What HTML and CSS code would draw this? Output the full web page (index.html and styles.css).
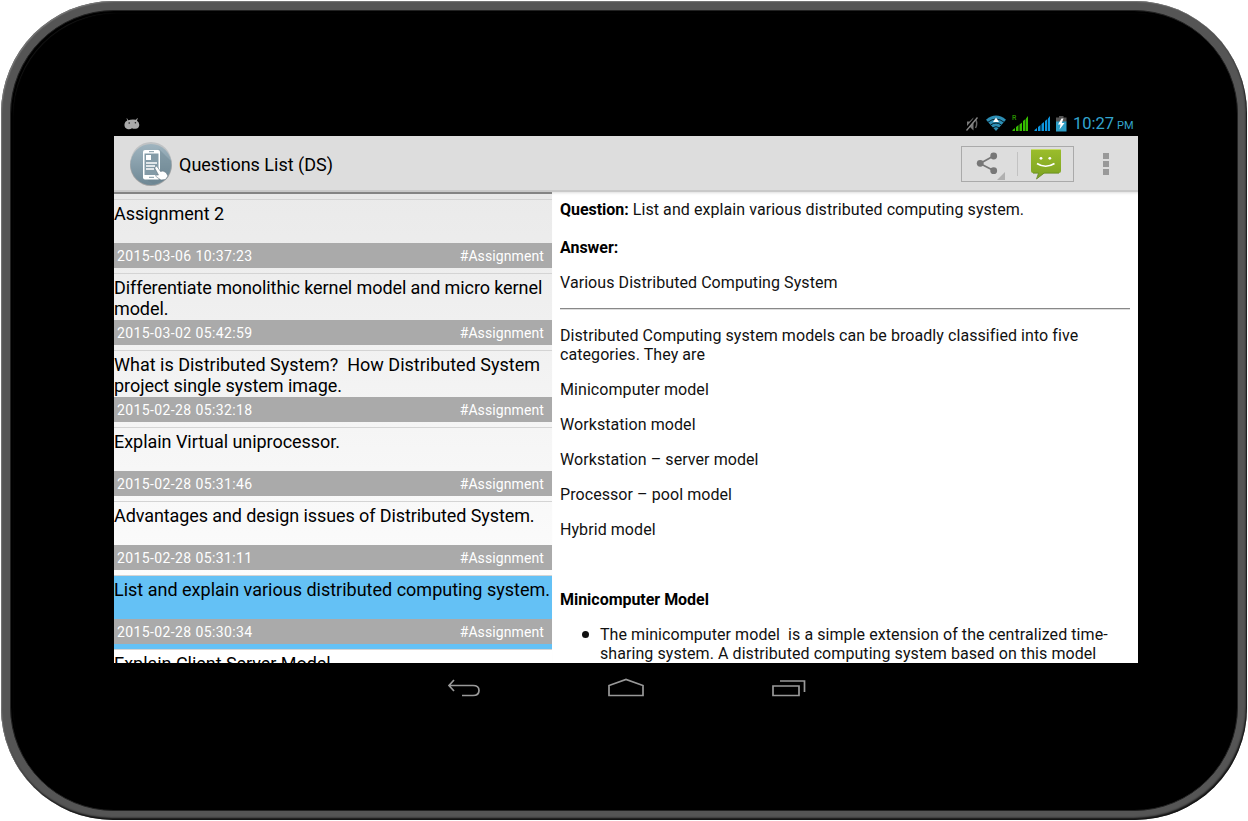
FILE: index.html
```html
<!DOCTYPE html>
<html lang="en">
<head>
<meta charset="utf-8">
<title>Questions List (DS)</title>
<link rel="stylesheet" href="styles.css">
</head>
<body>
<div class="tablet"><div class="bezel"><div class="screen">
  <div class="status">
    <svg class="droid" width="16" height="12" viewBox="0 0 16 12"><path d="M3 .2 4.2 2.2Q8 1 12 1.8L13.3 0 13.7.4 13 2.7Q15.2 4 15.3 7 15 10.6 11.5 10.8 9.5 11 8 10.2 6.5 11.5 4 11.2 0 10.5.5 6 1 3.5 3.3 2.6L2.5.5Z" fill="#aaa"/><circle cx="5.2" cy="5" r=".8" fill="#222"/><circle cx="11.4" cy="4.8" r=".8" fill="#222"/></svg>
    <svg class="indicators" width="104" height="20" viewBox="0 0 104 20">
      <path d="M3 8.500H5.500L9.500 4.500V17.500L6 14H3Z" fill="#777"/><path d="M11.500 6.500Q14 10 11.500 15" fill="none" stroke="#666" stroke-width="1.500"/><path d="M1.500 16.500 12.500 3.500" stroke="#000" stroke-width="2"/><path d="M2.500 17.500 13.500 4.500" stroke="#888" stroke-width="1.300"/>
      <path d="M22 6.700Q32 -1.500 42 6.700L32 18Z" fill="#2d8eb4"/><path d="M24 9.200Q32 2.800 40 9.200M26.600 12Q32 8 37.400 12M29 14.700Q32 12.600 35 14.700" fill="none" stroke="#051f2a"/><path d="M32 4.500 35 9H29Z" fill="#fff"/>
      <path d="M48.500 18V17L51 15V18ZM52 18V14L54.500 12V18ZM55.500 18V11.500L58 9.500V18ZM59 18V8L61.500 6V18ZM62 18V5.500L64 3V18Z" fill="#36bd00"/>
      <text class="roaming" x="48" y="7">R</text>
      <path d="M70.500 18V17L73 15V18ZM74 18V14L76.500 12V18ZM77.500 18V11L80 9V18ZM81 18V8L83.300 6V18ZM84 18V5.500L86 3V18Z" fill="#0c95df"/>
      <path d="M95 3H99.500V4.500H102.500V9H92V4.500H95Z" fill="#555"/><path d="M92 8.500H102.500V18.500H92Z" fill="#2d9dc5"/><path d="M97.500 5.500 94 11.500H96.500L95.500 16.500 100.500 10H97.800L99.500 5.500Z" fill="#fff"/>
    </svg>
    <div class="clock">10:27<span class="pm">PM</span></div>
  </div>
  <div class="actionbar">
    <svg class="appicon" width="44" height="48" viewBox="0 0 44 48">
      <defs><linearGradient id="disc" x2="0" y2="1"><stop offset="0" stop-color="#9fb4bf"/><stop offset="1" stop-color="#6f8895"/></linearGradient></defs>
      <circle cx="22" cy="25" r="21" fill="#a3a3a3"/><circle cx="22" cy="22.500" r="20.500" fill="#bfc2c4"/><circle cx="22" cy="24.500" r="20.500" fill="url(#disc)"/>
      <path d="M30 9 42 21Q43 33 34 41L24 44 14 37Z" fill="#647d8a" opacity=".35"/>
      <rect x="14" y="10" width="17" height="29.500" rx="2" fill="#fff"/><rect x="15.500" y="13.500" width="14" height="21.500" fill="#849ba7"/><rect x="17" y="15" width="5" height="5" fill="#fff"/><path d="M17 23H28M17 26H26M17 29H25" stroke="#fff" stroke-width="1.300"/><path d="M20 37.300H25M20 11.700H25" stroke="#7f97a3"/>
      <path d="M26 27Q27.500 25.500 28.500 27L31.500 31.500 34 31 37 32.500 39 36 36.500 39.500 32 40 29 38 26.500 36Q26.500 34.500 29.500 35L26 28.500Z" fill="#fff" stroke="#647783" stroke-width=".6"/>
    </svg>
    <h1 class="title">Questions List (DS)</h1>
    <div class="share">
      <svg width="113" height="36" viewBox="0 0 113 36">
        <path d="M32.500 10 19 17.500 32.500 24.500" fill="none" stroke="#777" stroke-width="1.700"/><g fill="#777"><circle cx="32.700" cy="10" r="3.400"/><circle cx="19.200" cy="17.300" r="3.400"/><circle cx="32.700" cy="24.700" r="3.400"/></g>
        <path d="M44 26V34H36Z" fill="#b0b0b0"/><path d="M56.500 6V30" stroke="#c2c2c2"/>
        <defs><linearGradient id="sms" x2="0" y2="1"><stop offset="0" stop-color="#9bbd2b"/><stop offset="1" stop-color="#7da323"/></linearGradient></defs>
        <path d="M71.500 3H98.500Q100 3 100 4.500V25Q100 27 98 27H83.500L76 32.500 77.500 27H72Q70 27 70 25V4.500Q70 3 71.500 3Z" fill="url(#sms)"/><path d="M70.500 3.500H99.500" stroke="#c7dc65"/><path d="M72 27.200H77.500L75.500 33 83 27.200H98" fill="none" stroke="#5f8518" stroke-width=".8"/>
        <circle cx="80" cy="12.300" r="1.400" fill="#fff"/><circle cx="88.800" cy="12.300" r="1.400" fill="#fff"/><path d="M76 17.500Q84.500 23 93.500 17.500" fill="none" stroke="#fff" stroke-width="1.600"/>
      </svg>
    </div>
    <div class="overflow"><i></i><i></i><i></i></div>
  </div>
  <div class="content">
    <div class="list">
      <div class="row"><div class="name snug">Assignment 2</div><div class="meta"><span class="date">2015-03-06 10:37:23</span><span class="tag">#Assignment</span></div></div>
      <div class="row"><div class="name tall tight">Differentiate monolithic kernel model and micro kernel<br>model.</div><div class="meta"><span class="date">2015-03-02 05:42:59</span><span class="tag">#Assignment</span></div></div>
      <div class="row"><div class="name tall">What is Distributed System?&nbsp; How Distributed System<br><span class="snug">project single system image.</span></div><div class="meta"><span class="date">2015-02-28 05:32:18</span><span class="tag">#Assignment</span></div></div>
      <div class="row"><div class="name snug">Explain Virtual uniprocessor.</div><div class="meta"><span class="date">2015-02-28 05:31:46</span><span class="tag">#Assignment</span></div></div>
      <div class="row"><div class="name tight">Advantages and design issues of Distributed System.</div><div class="meta"><span class="date">2015-02-28 05:31:11</span><span class="tag">#Assignment</span></div></div>
      <div class="row selected"><div class="name">List and explain various distributed computing system.</div><div class="meta"><span class="date">2015-02-28 05:30:34</span><span class="tag">#Assignment</span></div></div>
      <div class="row"><div class="name snug">Explain Client Server Model.</div></div>
    </div>
    <div class="detail">
      <div><b>Question:</b> List and explain various distributed computing system.<br><br><b>Answer:</b></div>
      <p>Various Distributed Computing System</p>
      <hr>
      <p>Distributed Computing system models can be broadly classified into five<br>categories. They are</p>
      <p>Minicomputer model</p>
      <p>Workstation model</p>
      <p>Workstation – server model</p>
      <p>Processor – pool model</p>
      <p>Hybrid model</p>
      <p>&nbsp;</p>
      <p><b>Minicomputer Model</b></p>
      <div class="item"><i class="bullet"></i><div>The minicomputer model&nbsp; is a simple extension of the centralized time-<br>sharing system. A distributed computing system based on this model</div></div>
    </div>
  </div>
  <div class="nav">
    <svg width="36" height="24" viewBox="0 0 36 24"><path d="M8 2 3 7.500 8 13M3 7.500H27Q33 7.500 33 12.500T27 17.500H16" fill="none" stroke="#999" stroke-width="1.700"/></svg>
    <svg width="38" height="24" viewBox="0 0 38 24"><path d="M2 17.500V7.500L19 1.500 36 7.500V17.500Z" fill="none" stroke="#999" stroke-width="1.700"/></svg>
    <svg width="36" height="24" viewBox="0 0 36 24"><path d="M3 8H29V17.500H3ZM10 3H34.500V14" fill="none" stroke="#999" stroke-width="1.700"/></svg>
  </div>
</div></div></div>
</body>
</html>
```
FILE: styles.css
```css
* { box-sizing: border-box; }
body { margin: 0; background: #fff; font-family: Roboto, "Liberation Sans", sans-serif; color: #000; }
.tablet { width: 1246px; height: 819px; margin: 1px; padding: 9px; border-radius: 112px; background: #555; box-shadow: inset 1px 1px 1px #777, inset -1px -2px 2px #111; }
.bezel { height: 100%; border-radius: 104px; background: #000; border: 1px solid #222; box-shadow: inset 1px 1px 0 1px #000, inset 3px 3px 1px -1px #181818; padding: 100px 103px 0; }
.screen { width: 1024px; height: 600px; background: #000; }
.status { height: 25px; display: flex; align-items: center; padding: 0 5px 0 10px; }
.droid { margin-top: 1px; }
.indicators { margin-left: auto; margin-top: -2px; }
.roaming { font-size: 7px; fill: #36bd00; }
.clock { width: 60px; margin-left: 5px; padding-top: 1px; font-size: 16.500px; color: #33a5cf; line-height: 25px; white-space: nowrap; }
.pm { font-size: 11px; margin-left: 3px; }
.actionbar { height: 56px; background: #ddd; border-bottom: 2px solid #c9c9c9; display: flex; align-items: center; padding-left: 15px; }
.appicon { margin-top: 1px; }
.title { margin: 2px 0 0 6px; font-size: 18px; font-weight: 400; }
.share { margin-left: auto; margin-top: 2px; width: 113px; height: 36px; border: 1px solid #aaa; }
.share svg { display: block; margin: -1px; }
.overflow { width: 64px; display: flex; flex-direction: column; align-items: center; gap: 2px; margin-top: 1px; }
.overflow i { width: 6px; height: 6px; background: #999; }
.content { height: 471px; display: flex; overflow: hidden; background: #fff; }
.list { width: 438px; height: 471px; overflow: hidden; background: linear-gradient(#eaeaea, #fff 95%); border-top: 2px solid #858585; padding-top: 5px; }
.row { border-top: 1px solid #d4d4d4; padding-bottom: 5px; }
.name { height: 43px; font-size: 18px; line-height: 21px; padding-top: 3px; white-space: nowrap; }
.name.tall { height: 46px; }
.snug { letter-spacing: -.04px; }
.tight { letter-spacing: -.09px; }
.meta { height: 25px; background: #aaa; color: #fff; padding: 1px 8px 0 3px; display: flex; align-items: center; justify-content: space-between; font-size: 14px; }
.date { letter-spacing: .39px; }
.tag { letter-spacing: .1px; }
.selected { background: #64c1f5; }
.detail { flex: 1; padding: 8px; font-size: 16px; line-height: 19px; letter-spacing: .07px; white-space: nowrap; color: #111; box-shadow: inset 0 3px 3px -2px #ddd; }
.detail b { color: #000; font-weight: 700; letter-spacing: -.03px; }
.detail p { margin: 16px 0; }
.detail hr { margin: 0; height: 2px; border: 0; border-top: 1px solid #888; border-bottom: 1px solid #ddd; }
.item { display: flex; padding-left: 22px; }
.bullet { width: 7px; height: 7px; border-radius: 50%; background: #111; margin: 6px 11px 0 0; }
.nav { height: 48px; display: flex; justify-content: center; gap: 125px; align-items: center; padding-top: 6px; }
```
